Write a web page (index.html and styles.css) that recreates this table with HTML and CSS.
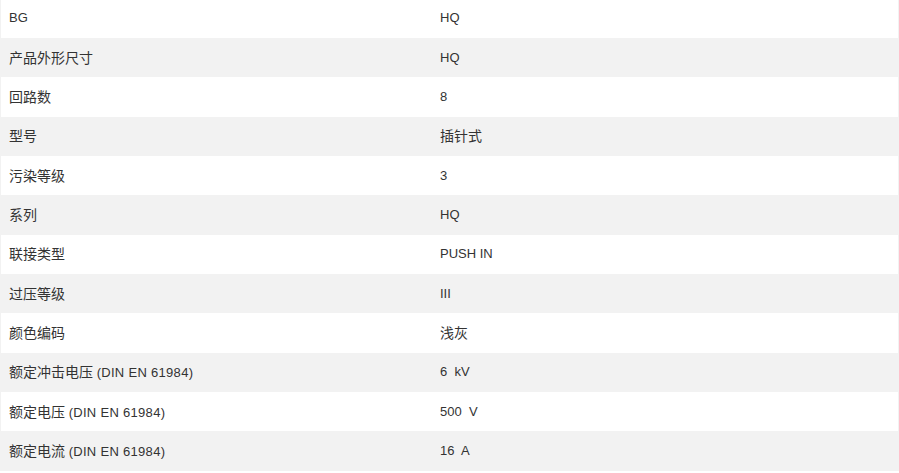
FILE: index.html
```html
<!DOCTYPE html>
<html lang="zh">
<head>
<meta charset="utf-8">
<title>参数</title>
<link rel="stylesheet" href="styles.css">
</head>
<body>
<div class="specs">
  <div class="row"><div class="k">BG</div><div class="v">HQ</div></div>
  <div class="row"><div class="k"><span class="zh">产品外形尺寸</span></div><div class="v">HQ</div></div>
  <div class="row"><div class="k"><span class="zh">回路数</span></div><div class="v">8</div></div>
  <div class="row"><div class="k"><span class="zh">型号</span></div><div class="v"><span class="zh">插针式</span></div></div>
  <div class="row"><div class="k"><span class="zh">污染等级</span></div><div class="v">3</div></div>
  <div class="row"><div class="k"><span class="zh">系列</span></div><div class="v">HQ</div></div>
  <div class="row"><div class="k"><span class="zh">联接类型</span></div><div class="v">PUSH IN</div></div>
  <div class="row"><div class="k"><span class="zh">过压等级</span></div><div class="v">III</div></div>
  <div class="row"><div class="k"><span class="zh">颜色编码</span></div><div class="v"><span class="zh">浅灰</span></div></div>
  <div class="row"><div class="k"><span class="zh">额定冲击电压</span> <span class="std">(DIN EN 61984)</span></div><div class="v">6  kV</div></div>
  <div class="row"><div class="k"><span class="zh">额定电压</span> <span class="std">(DIN EN 61984)</span></div><div class="v">500  V</div></div>
  <div class="row"><div class="k"><span class="zh">额定电流</span> <span class="std">(DIN EN 61984)</span></div><div class="v">16  A</div></div>
</div>
</body>
</html>
```
FILE: styles.css
```css
html, body {
  margin: 0;
  padding: 0;
  background: #ffffff;
}
body {
  font-family: "Liberation Sans", Arial, "Noto Sans CJK SC", sans-serif;
  font-size: 13px;
  color: #333333;
  overflow: hidden;
}
.specs {
  margin-top: -1.33px;
  background: #f2f2f2;
  padding: 0 1px;
}
.row {
  display: grid;
  grid-template-columns: 430px 1fr;
  height: 39.33px;
  align-items: center;
  background: #ffffff;
  line-height: 18px;
}
.row:nth-child(even) {
  background: #f2f2f2;
}
.k {
  padding-left: 8px;
  white-space: nowrap;
}
.v {
  padding-left: 9px;
  white-space: pre;
}
.zh {
  font-family: "Noto Sans CJK SC", sans-serif;
  font-size: 14px;
}
.std {
  letter-spacing: 0.3px;
}
```
